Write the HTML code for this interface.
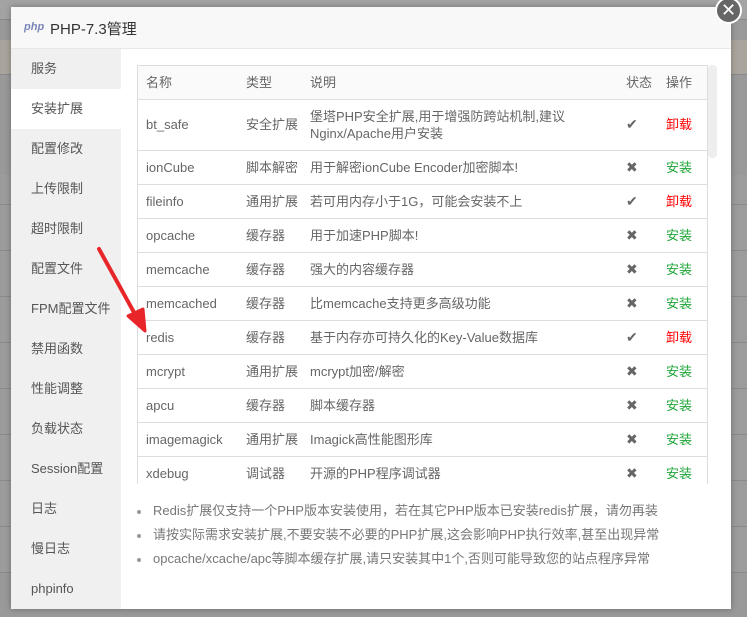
<!DOCTYPE html>
<html><head><meta charset="utf-8"><style>
*{margin:0;padding:0;box-sizing:border-box}
body{width:747px;height:617px;overflow:hidden;background:#999;font-family:"Liberation Sans","Noto Sans CJK SC",sans-serif;font-size:13px;color:#666;position:relative}
.bg{position:absolute;left:0;right:0;background:#9c9c9c;border-bottom:1px solid #8a8a8a}
.modal{position:absolute;left:11px;top:7px;width:720px;height:602px;background:#fff;box-shadow:0 0 6px rgba(0,0,0,.3)}
.hd{height:42px;background:#f8f8f8;border-bottom:1px solid #e8e8e8;position:relative}
.hd .logo{position:absolute;left:13px;top:14px;font:italic bold 11px "Liberation Sans",sans-serif;color:#7a86b8}
.hd .t{position:absolute;left:39px;top:11px;font-size:15px;color:#333}
.side{position:absolute;left:0;top:42px;width:110px;bottom:0;background:#f0f0f0}
.side div{height:40px;line-height:40px;padding-left:20px;color:#555;font-size:13px}
.side div.on{background:#fff}
.tb{position:absolute;left:126px;top:58px;width:571px;height:419px;overflow:hidden;border:1px solid #ddd;border-bottom:none}
table{border-collapse:collapse;width:100%}
td,th{font-weight:normal;text-align:left;border-bottom:1px solid #ddd;height:34px;padding:0 0 0 8px;color:#666;line-height:17px}
th{height:33px;background:#fafafa}
.sb{position:absolute;left:697px;top:58px;width:9px;height:93px;background:#eee;border-radius:4px}
.ok{color:#666;font-size:14px}
.r{color:#f00}.g{color:#20a53a}
ul{position:absolute;left:126px;top:494px;list-style:none}
li{height:24px;line-height:20px;padding-left:16px;position:relative;color:#777}
li:before{content:"";position:absolute;left:0;top:9px;width:4px;height:4px;border-radius:2px;background:#999}
.close{position:absolute;left:704px;top:-10px;width:27px;height:27px;border-radius:50%;background:#666;border:2px solid #fff;color:#fff;text-align:center;line-height:22px;font-size:18px}
</style></head><body>
<div class="bg" style="top:0;height:20px;background:#a3a3a3"></div>
<div class="bg" style="top:40px;height:35px;background:#aaa59c"></div>
<div class="bg" style="top:175px;height:30px"></div>
<div class="bg" style="top:205px;height:46px"></div>
<div class="bg" style="top:251px;height:46px"></div>
<div class="bg" style="top:297px;height:46px"></div>
<div class="bg" style="top:343px;height:46px"></div>
<div class="bg" style="top:389px;height:46px"></div>
<div class="bg" style="top:435px;height:46px"></div>
<div class="bg" style="top:481px;height:46px"></div>
<div class="bg" style="top:527px;height:46px"></div>
<div class="modal">
<div class="hd"><span class="logo">php</span><span class="t">PHP-7.3管理</span></div>
<div class="side">
<div>服务</div><div class="on">安装扩展</div><div>配置修改</div><div>上传限制</div><div>超时限制</div><div>配置文件</div><div>FPM配置文件</div><div>禁用函数</div><div>性能调整</div><div>负载状态</div><div>Session配置</div><div>日志</div><div>慢日志</div><div>phpinfo</div>
</div>
<div class="tb"><table>
<colgroup><col style="width:100px"><col style="width:64px"><col style="width:316px"><col style="width:40px"><col></colgroup>
<tr><th>名称</th><th>类型</th><th>说明</th><th>状态</th><th>操作</th></tr>
<tr><td style="height:51px">bt_safe</td><td>安全扩展</td><td>堡塔PHP安全扩展,用于增强防跨站机制,建议Nginx/Apache用户安装</td><td class="ok">✔</td><td class="r">卸载</td></tr>
<tr><td>ionCube</td><td>脚本解密</td><td>用于解密ionCube Encoder加密脚本!</td><td class="ok">✖</td><td class="g">安装</td></tr>
<tr><td>fileinfo</td><td>通用扩展</td><td>若可用内存小于1G，可能会安装不上</td><td class="ok">✔</td><td class="r">卸载</td></tr>
<tr><td>opcache</td><td>缓存器</td><td>用于加速PHP脚本!</td><td class="ok">✖</td><td class="g">安装</td></tr>
<tr><td>memcache</td><td>缓存器</td><td>强大的内容缓存器</td><td class="ok">✖</td><td class="g">安装</td></tr>
<tr><td>memcached</td><td>缓存器</td><td>比memcache支持更多高级功能</td><td class="ok">✖</td><td class="g">安装</td></tr>
<tr><td>redis</td><td>缓存器</td><td>基于内存亦可持久化的Key-Value数据库</td><td class="ok">✔</td><td class="r">卸载</td></tr>
<tr><td>mcrypt</td><td>通用扩展</td><td>mcrypt加密/解密</td><td class="ok">✖</td><td class="g">安装</td></tr>
<tr><td>apcu</td><td>缓存器</td><td>脚本缓存器</td><td class="ok">✖</td><td class="g">安装</td></tr>
<tr><td>imagemagick</td><td>通用扩展</td><td>Imagick高性能图形库</td><td class="ok">✖</td><td class="g">安装</td></tr>
<tr><td>xdebug</td><td>调试器</td><td>开源的PHP程序调试器</td><td class="ok">✖</td><td class="g">安装</td></tr>
</table></div>
<div class="sb"></div>
<ul>
<li>Redis扩展仅支持一个PHP版本安装使用，若在其它PHP版本已安装redis扩展，请勿再装</li>
<li>请按实际需求安装扩展,不要安装不必要的PHP扩展,这会影响PHP执行效率,甚至出现异常</li>
<li>opcache/xcache/apc等脚本缓存扩展,请只安装其中1个,否则可能导致您的站点程序异常</li>
</ul>
<div class="close">✕</div>
</div>
<svg style="position:absolute;left:0;top:0" width="747" height="617"><line x1="99" y1="249" x2="136" y2="316" stroke="#e8262a" stroke-width="4" stroke-linecap="round"/><polygon points="145,331 128,316 143,309" fill="#e8262a" stroke="#e8262a" stroke-width="3" stroke-linejoin="round"/></svg>
</body></html>
